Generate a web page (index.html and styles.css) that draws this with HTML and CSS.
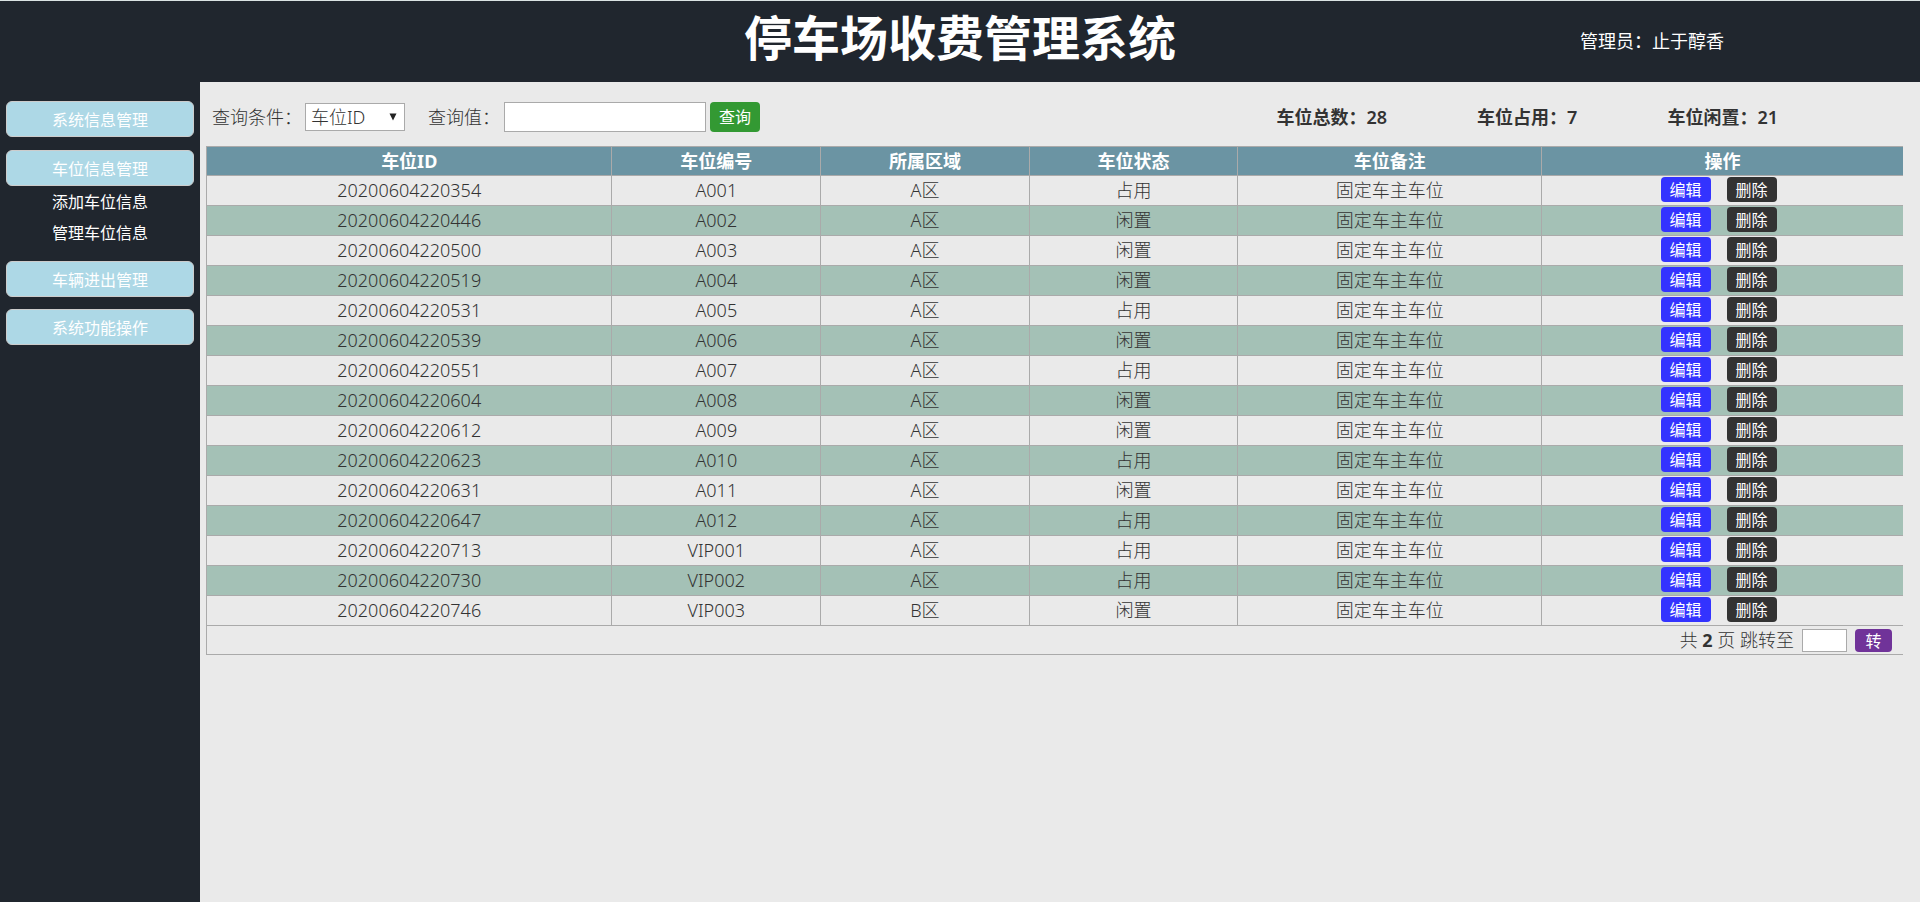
FILE: index.html
```html
<!DOCTYPE html>
<html lang="zh-CN">
<head>
<meta charset="utf-8">
<title>停车场收费管理系统</title>
<link rel="stylesheet" href="styles.css">
</head>
<body>
<header class="top">
  <h1 class="title">停车场收费管理系统</h1>
  <p class="admin">管理员：止于醇香</p>
</header>
<div class="layout">
  <nav class="side">
    <button class="menu" type="button">系统信息管理</button>
    <div class="group">
      <button class="menu" type="button">车位信息管理</button>
      <ul class="submenu">
        <li><a href="#add">添加车位信息</a></li>
        <li><a href="#manage">管理车位信息</a></li>
      </ul>
    </div>
    <button class="menu" type="button">车辆进出管理</button>
    <button class="menu" type="button">系统功能操作</button>
  </nav>
  <main class="content">
    <div class="toolbar">
      <form class="search">
        <label for="field">查询条件：</label>
        <span class="picker">
          <select id="field"><option>车位ID</option><option>车位编号</option><option>所属区域</option></select>
          <svg class="arrow" viewBox="0 0 8 8" aria-hidden="true"><path d="M0.5 0.5h7L4 7.5z"/></svg>
        </span>
        <label class="value-label" for="value">查询值：</label>
        <input class="value" id="value" type="text">
        <button class="btn query" type="button">查询</button>
      </form>
      <div class="stats">
        <span>车位总数：28</span>
        <span>车位占用：7</span>
        <span>车位闲置：21</span>
      </div>
    </div>
    <table class="grid">
      <colgroup><col class="c-id"><col class="c-mid"><col class="c-mid"><col class="c-mid"><col class="c-note"><col></colgroup>
      <thead>
        <tr><th>车位ID</th><th>车位编号</th><th>所属区域</th><th>车位状态</th><th>车位备注</th><th>操作</th></tr>
      </thead>
      <tbody>
        <tr><td>20200604220354</td><td>A001</td><td>A区</td><td>占用</td><td>固定车主车位</td><td><div class="ops"><button class="btn edit" type="button">编辑</button><button class="btn del" type="button">删除</button></div></td></tr>
        <tr><td>20200604220446</td><td>A002</td><td>A区</td><td>闲置</td><td>固定车主车位</td><td><div class="ops"><button class="btn edit" type="button">编辑</button><button class="btn del" type="button">删除</button></div></td></tr>
        <tr><td>20200604220500</td><td>A003</td><td>A区</td><td>闲置</td><td>固定车主车位</td><td><div class="ops"><button class="btn edit" type="button">编辑</button><button class="btn del" type="button">删除</button></div></td></tr>
        <tr><td>20200604220519</td><td>A004</td><td>A区</td><td>闲置</td><td>固定车主车位</td><td><div class="ops"><button class="btn edit" type="button">编辑</button><button class="btn del" type="button">删除</button></div></td></tr>
        <tr><td>20200604220531</td><td>A005</td><td>A区</td><td>占用</td><td>固定车主车位</td><td><div class="ops"><button class="btn edit" type="button">编辑</button><button class="btn del" type="button">删除</button></div></td></tr>
        <tr><td>20200604220539</td><td>A006</td><td>A区</td><td>闲置</td><td>固定车主车位</td><td><div class="ops"><button class="btn edit" type="button">编辑</button><button class="btn del" type="button">删除</button></div></td></tr>
        <tr><td>20200604220551</td><td>A007</td><td>A区</td><td>占用</td><td>固定车主车位</td><td><div class="ops"><button class="btn edit" type="button">编辑</button><button class="btn del" type="button">删除</button></div></td></tr>
        <tr><td>20200604220604</td><td>A008</td><td>A区</td><td>闲置</td><td>固定车主车位</td><td><div class="ops"><button class="btn edit" type="button">编辑</button><button class="btn del" type="button">删除</button></div></td></tr>
        <tr><td>20200604220612</td><td>A009</td><td>A区</td><td>闲置</td><td>固定车主车位</td><td><div class="ops"><button class="btn edit" type="button">编辑</button><button class="btn del" type="button">删除</button></div></td></tr>
        <tr><td>20200604220623</td><td>A010</td><td>A区</td><td>占用</td><td>固定车主车位</td><td><div class="ops"><button class="btn edit" type="button">编辑</button><button class="btn del" type="button">删除</button></div></td></tr>
        <tr><td>20200604220631</td><td>A011</td><td>A区</td><td>闲置</td><td>固定车主车位</td><td><div class="ops"><button class="btn edit" type="button">编辑</button><button class="btn del" type="button">删除</button></div></td></tr>
        <tr><td>20200604220647</td><td>A012</td><td>A区</td><td>占用</td><td>固定车主车位</td><td><div class="ops"><button class="btn edit" type="button">编辑</button><button class="btn del" type="button">删除</button></div></td></tr>
        <tr><td>20200604220713</td><td>VIP001</td><td>A区</td><td>占用</td><td>固定车主车位</td><td><div class="ops"><button class="btn edit" type="button">编辑</button><button class="btn del" type="button">删除</button></div></td></tr>
        <tr><td>20200604220730</td><td>VIP002</td><td>A区</td><td>占用</td><td>固定车主车位</td><td><div class="ops"><button class="btn edit" type="button">编辑</button><button class="btn del" type="button">删除</button></div></td></tr>
        <tr><td>20200604220746</td><td>VIP003</td><td>B区</td><td>闲置</td><td>固定车主车位</td><td><div class="ops"><button class="btn edit" type="button">编辑</button><button class="btn del" type="button">删除</button></div></td></tr>
      </tbody>
      <tfoot>
        <tr><td colspan="6"><form class="pager"><label for="page">共 <b>2</b> 页 跳转至</label><input id="page" type="text"><button class="btn go" type="button">转</button></form></td></tr>
      </tfoot>
    </table>
  </main>
</div>
</body>
</html>
```
FILE: styles.css
```css
* { box-sizing: border-box; }
body {
  margin: 0;
  min-height: 100vh;
  display: flex;
  flex-direction: column;
  background: #eaeaea;
  color: #333;
  font-family: "Noto Sans", "Noto Sans CJK SC", sans-serif;
  font-size: 18px;
  font-weight: 300;
  line-height: 24px;
}
button, input, select { font: inherit; color: inherit; }
.top {
  display: grid;
  grid-template-columns: 1fr auto 1fr;
  align-items: center;
  height: 82px;
  padding-bottom: 8px;
  border-top: 1px solid #dbe3e3;
  background: #20262e;
  color: #fff;
}
.title {
  grid-column: 2;
  margin: 0;
  font-size: 48px;
  font-weight: 700;
  line-height: 64px;
}
.admin {
  justify-self: end;
  margin: 6px 196px 0 0;
  font-weight: 400;
}
.layout { display: flex; flex: 1; }
.side {
  display: flex;
  flex-direction: column;
  gap: 12px;
  width: 200px;
  padding: 19px 6px;
  background: #20262e;
  color: #fff;
  font-size: 16px;
  font-weight: 400;
}
.menu {
  display: block;
  width: 100%;
  height: 36px;
  padding: 2px 0 0;
  border: 1px solid #ccc;
  border-radius: 6px;
  background: #add8e6;
}
.group { padding-top: 1px; }
.submenu {
  margin: 0;
  padding: 1px 0 0;
  list-style: none;
  line-height: 31px;
  text-align: center;
}
.submenu a { color: #fff; text-decoration: none; }
.content { flex: 1; padding: 0 17px 0 6px; }
.toolbar {
  display: flex;
  justify-content: space-between;
  align-items: center;
  height: 64px;
  padding: 6px 125px 0 6px;
}
.search { display: flex; align-items: center; }
.picker { position: relative; width: 100px; margin-left: 3px; }
.picker select {
  display: block;
  width: 100%;
  height: 28px;
  padding: 0 5px;
  appearance: none;
  border: 1px solid #aaa;
  border-radius: 0;
  background: #fff;
}
.arrow {
  position: absolute;
  right: 8px;
  top: 10px;
  width: 8px;
  height: 8px;
  fill: #222;
}
.value-label { margin-left: 23px; }
.value {
  width: 202px;
  height: 30px;
  margin: 0 4px;
  padding: 0 6px;
  border: 1px solid #aaa;
}
.btn {
  padding: 0;
  border: 0;
  border-radius: 4px;
  color: #fff;
  font-size: 16px;
  font-weight: 400;
}
.query { width: 50px; height: 30px; background: #339933; }
.stats { display: flex; gap: 90px; font-weight: 600; }
.grid {
  width: 100%;
  table-layout: fixed;
  border-collapse: collapse;
  text-align: center;
}
.grid th, .grid td {
  padding: 0;
  border: 1px solid #aaa;
  border-right: 0;
}
.c-id { width: 23.9%; }
.c-mid { width: 12.3%; }
.c-note { width: 17.9%; }
.grid th { height: 29px; background: #6b94a3; color: #fff; font-weight: 700; }
.grid td { height: 30px; }
.grid tbody td { padding-bottom: 2px; }
.grid tbody tr:nth-child(even) { background: #a4c1b6; }
.ops { display: flex; justify-content: center; gap: 16px; padding-right: 8px; }
.ops .btn { width: 50px; height: 25px; }
.edit { background: #3333ff; }
.del { background: #333; }
.grid tfoot td { height: 29px; }
.pager { display: flex; justify-content: flex-end; align-items: center; gap: 8px; padding-right: 11px; }
.pager b { font-weight: 700; }
.pager input { width: 45px; height: 23px; padding: 0 4px; border: 1px solid #aaa; }
.go { width: 37px; height: 23px; background: #703399; }
```
